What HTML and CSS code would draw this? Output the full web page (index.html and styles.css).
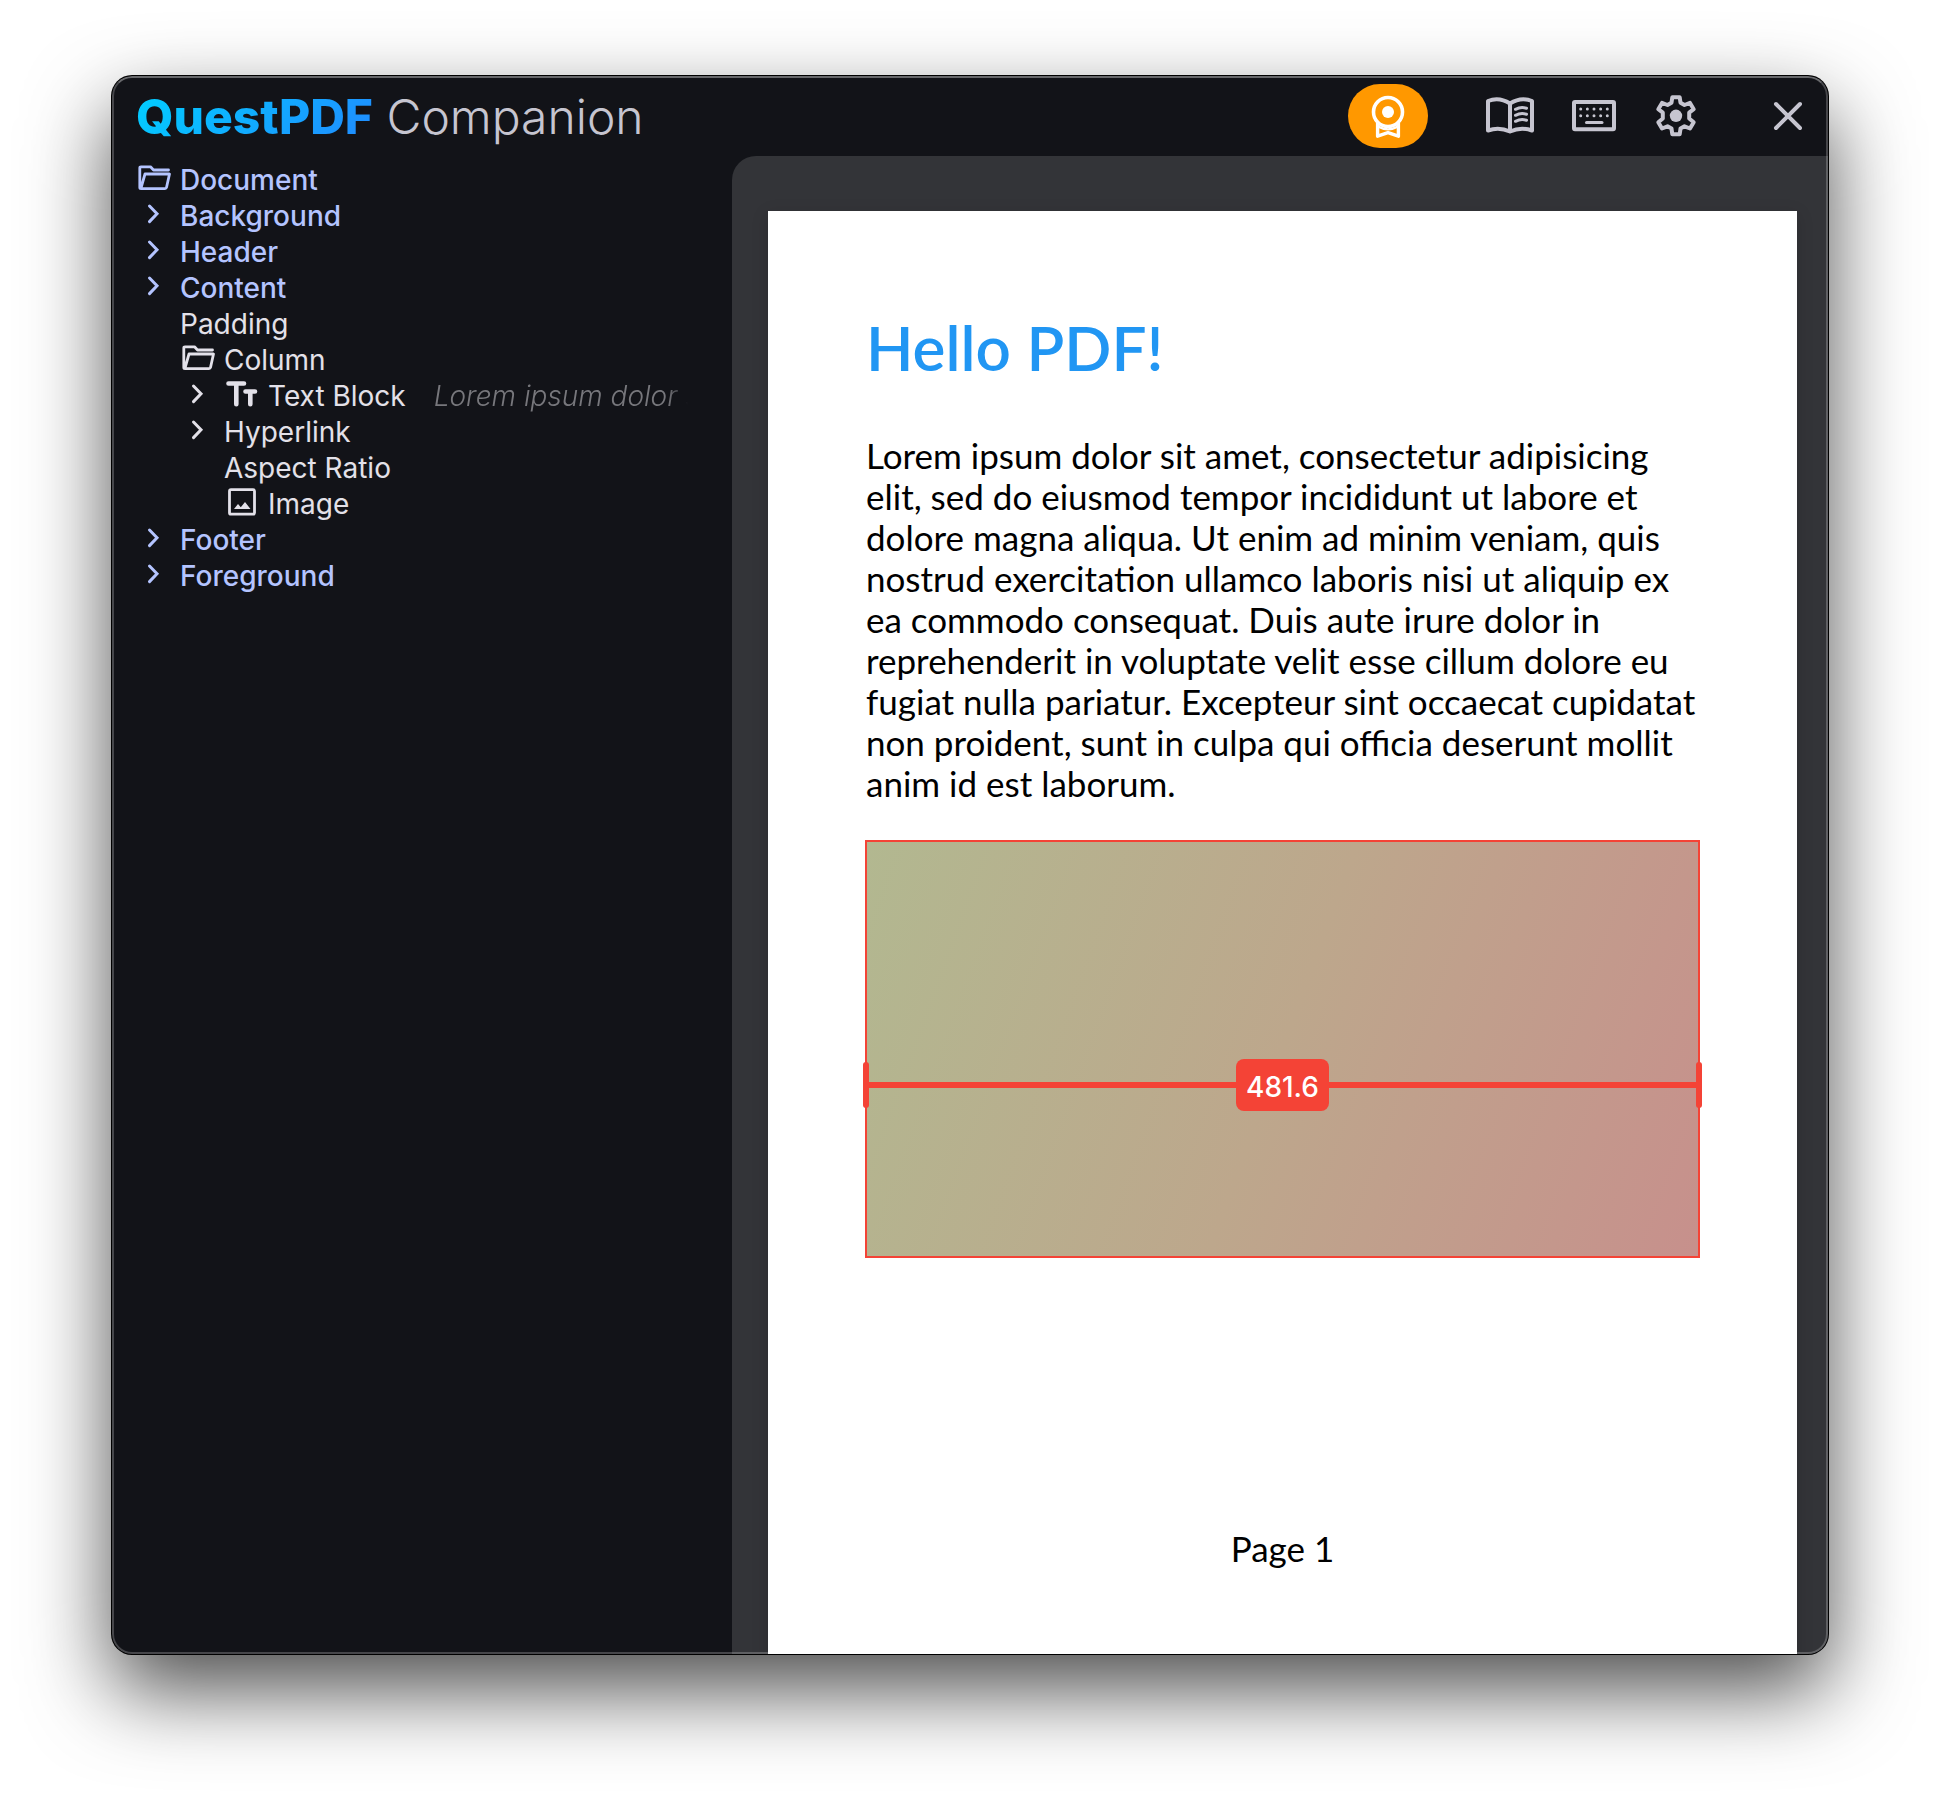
FILE: index.html
```html
<!DOCTYPE html>
<html lang="en">
<head>
  <meta charset="utf-8">
  <meta name="viewport" content="width=device-width, initial-scale=1">
  <title>QuestPDF Companion</title>
  <link rel="stylesheet" href="styles.css">
</head>
<body>
  <svg class="symbols" aria-hidden="true">
    <symbol id="folder" viewBox="0 0 36 36">
      <path d="M32.500 8H17.500L14.500 4.800H5Q3.800 4.800 3.800 6V25.500Q3.800 26.600 5 26.600H29Q30.200 26.600 30.500 25.500L33.500 12H9L5 26" fill="none" stroke="currentColor" stroke-width="2.800" stroke-linejoin="round" stroke-linecap="round"/>
    </symbol>
    <symbol id="chevron" viewBox="0 0 36 36">
      <path d="M13.500 8L21 15.800L13.500 23.600" fill="none" stroke="currentColor" stroke-width="3" stroke-linecap="round" stroke-linejoin="miter"/>
    </symbol>
    <symbol id="text" viewBox="0 0 36 36">
      <path d="M4.500 5.500H20M12.300 5.500V26.300M21.500 13.500H31M26.300 13.500V26.300" fill="none" stroke="currentColor" stroke-width="4.600" stroke-linecap="round"/>
    </symbol>
    <symbol id="image" viewBox="0 0 36 36">
      <rect x="5.500" y="3.700" width="25" height="24.500" rx="1.500" fill="none" stroke="currentColor" stroke-width="2.800"/>
      <path d="M10 23L14 18L16.800 21.300L21 16L26.500 23Z" fill="currentColor"/>
    </symbol>
  </svg>

  <div class="window">
    <header class="titlebar">
      <h1 class="brand"><span class="brand-name">QuestPDF</span> <span class="brand-product">Companion</span></h1>
      <button class="license" type="button" aria-label="License">
        <svg viewBox="0 0 48 48" fill="none" stroke="currentColor" stroke-width="3.600">
          <circle cx="24" cy="20" r="14.500"/>
          <circle cx="24" cy="20" r="6" fill="currentColor" stroke="none"/>
          <path d="M13.600 31V44.200L24 40.700L34.400 44.200V31" stroke-width="3.400" stroke-linejoin="round"/>
          <path d="M14.500 34.800Q24 40 33.500 34.800" stroke-width="2.400"/>
        </svg>
      </button>
      <nav class="tools" aria-label="Tools">
        <button class="tool" type="button" aria-label="Documentation">
          <svg viewBox="0 0 48 48" fill="none" stroke="currentColor" stroke-width="4" stroke-linejoin="round">
            <path d="M24 11.500Q13 4.500 2 9V38.500Q13 34.500 24 39.500Q35 34.500 46 38.500V9Q35 4.500 24 11.500V39.500"/>
            <path d="M29.500 17.300Q35 14.500 40.500 16.300M29.500 23.300Q35 20.500 40.500 22.300M29.500 29.300Q35 26.500 40.500 28.300" stroke-width="3" stroke-linecap="round"/>
          </svg>
        </button>
        <button class="tool" type="button" aria-label="Keyboard shortcuts">
          <svg viewBox="0 0 48 48" fill="none" stroke="currentColor" stroke-linecap="round">
            <rect x="5" y="10" width="40" height="27.300" rx="1" stroke-width="4"/>
            <path d="M11.700 17H39M11.700 23.700H39" stroke-width="3" stroke-dasharray="0 6.650"/>
            <path d="M17.500 30.500H33" stroke-width="3"/>
          </svg>
        </button>
        <button class="tool" type="button" aria-label="Settings">
          <svg viewBox="0 0 48 48" fill="none" stroke="currentColor" stroke-width="4" stroke-linejoin="round">
            <path d="M20.300 5.200H27.700L28.500 10.700L32.500 13L38 10.900L41.700 17.200L37.200 20.700V26.500L41.700 30.200L38 36.500L32.500 34.300L28.500 36.600L27.700 42.300H20.300L19.500 36.600L15.500 34.300L10 36.500L6.300 30.200L10.800 26.500V20.700L6.300 17.200L10 10.900L15.500 13L19.500 10.700Z"/>
            <circle cx="24" cy="23.800" r="6.200" fill="currentColor" stroke="none"/>
          </svg>
        </button>
      </nav>
      <button class="tool" type="button" aria-label="Close">
        <svg viewBox="0 0 48 48" fill="none" stroke="currentColor" stroke-width="4" stroke-linecap="round">
          <path d="M12 12L36 36M36 12L12 36"/>
        </svg>
      </button>
    </header>

    <div class="workspace">
      <aside class="sidebar">
        <ul class="tree">
          <li class="node section"><span class="slot"><svg><use href="#folder"/></svg></span><span class="label">Document</span></li>
          <li class="node section"><span class="slot"><svg><use href="#chevron"/></svg></span><span class="label">Background</span></li>
          <li class="node section"><span class="slot"><svg><use href="#chevron"/></svg></span><span class="label">Header</span></li>
          <li class="node section"><span class="slot"><svg><use href="#chevron"/></svg></span><span class="label">Content</span></li>
          <li class="node"><span class="slot"></span><span class="label">Padding</span></li>
          <li>
            <ul class="branch">
              <li class="node"><span class="slot"><svg><use href="#folder"/></svg></span><span class="label">Column</span></li>
              <li class="node"><span class="slot"><svg><use href="#chevron"/></svg></span><span class="slot"><svg><use href="#text"/></svg></span><span class="label">Text Block</span><span class="preview">Lorem ipsum dolor sit</span></li>
              <li class="node"><span class="slot"><svg><use href="#chevron"/></svg></span><span class="label">Hyperlink</span></li>
              <li class="node"><span class="slot"></span><span class="label">Aspect Ratio</span></li>
              <li class="node"><span class="slot"></span><span class="slot"><svg><use href="#image"/></svg></span><span class="label">Image</span></li>
            </ul>
          </li>
          <li class="node section"><span class="slot"><svg><use href="#chevron"/></svg></span><span class="label">Footer</span></li>
          <li class="node section"><span class="slot"><svg><use href="#chevron"/></svg></span><span class="label">Foreground</span></li>
        </ul>
      </aside>

      <main class="viewer">
        <article class="page">
          <h2 class="page-title">Hello PDF!</h2>
          <p class="page-text">Lorem ipsum dolor sit amet, consectetur adipisicing elit, sed do eiusmod tempor incididunt ut labore et dolore magna aliqua. Ut enim ad minim veniam, quis nostrud exercitation ullamco laboris nisi ut aliquip ex ea commodo consequat. Duis aute irure dolor in reprehenderit in voluptate velit esse cillum dolore eu fugiat nulla pariatur. Excepteur sint occaecat cupidatat non proident, sunt in culpa qui officia deserunt mollit anim id est laborum.</p>
          <div class="picture">
            <div class="measure"><span class="measure-value">481.6</span></div>
          </div>
          <footer class="page-footer">Page 1</footer>
        </article>
      </main>
    </div>
  </div>
</body>
</html>
```
FILE: styles.css
```css
* {
  box-sizing: border-box;
}

body {
  display: flex;
  height: 100vh;
  margin: 0;
  padding: 76px 112px 148px;
  overflow: hidden;
  background: #fff;
  font-family: Inter, "Liberation Sans", sans-serif;
}

h1,
h2,
p,
ul {
  margin: 0;
  padding: 0;
}

ul {
  list-style: none;
}

button {
  padding: 0;
  border: 0;
  background: none;
  cursor: pointer;
}

svg {
  display: block;
  width: 100%;
  height: 100%;
}

.symbols {
  position: absolute;
  width: 0;
  height: 0;
}

/* Window frame */

.window {
  position: relative;
  display: flex;
  flex: 1;
  flex-direction: column;
  min-width: 0;
  overflow: hidden;
  border-radius: 20px;
  background: #121318;
  box-shadow: 0 0 0 1px #000, 0 36px 84px rgba(0, 0, 0, 0.7);
}

.window::after {
  position: absolute;
  inset: 0;
  border: 2px solid rgba(255, 255, 255, 0.22);
  border-top-color: rgba(255, 255, 255, 0.36);
  border-radius: 20px;
  content: "";
  pointer-events: none;
}

.titlebar {
  display: flex;
  flex: none;
  align-items: center;
  height: 80px;
  padding: 0 16px 0 24px;
  color: #c6c5d0;
}

.brand {
  flex: 1;
  padding-top: 2px;
  font-size: 48px;
  font-weight: 300;
  line-height: 64px;
  white-space: nowrap;
}

.brand-name {
  background: linear-gradient(135deg, #00d0ff, #1e90ff 90%);
  background-clip: text;
  color: transparent;
  font-weight: 800;
}

.license {
  width: 80px;
  height: 64px;
  padding: 8px 16px;
  border-radius: 32px;
  background: #ff9800;
  color: #fff;
}

.tools {
  display: flex;
  gap: 35px;
  margin: 0 64px 0 58px;
}

.tool {
  width: 48px;
  height: 48px;
  color: inherit;
}

/* Document tree */

.workspace {
  display: flex;
  flex: 1;
  min-height: 0;
}

.sidebar {
  flex: none;
  width: 620px;
  padding: 6px 44px 0 24px;
}

.node {
  display: flex;
  align-items: center;
  height: 36px;
  color: #e3e1e9;
  font-size: 28px;
  line-height: 36px;
  white-space: nowrap;
}

.section {
  color: #b4c4ff;
  font-weight: 500;
}

.branch {
  padding-left: 44px;
}

.slot {
  flex: none;
  width: 36px;
  height: 36px;
  margin-right: 8px;
}

.preview {
  flex: 1;
  min-width: 0;
  margin-left: 28px;
  overflow: hidden;
  color: #77777c;
  font-style: italic;
  font-weight: 300;
  mask-image: linear-gradient(to left, transparent, #000 20px);
}

/* Page preview */

.viewer {
  flex: 1;
  min-width: 0;
  padding: 55px 31px 0 36px;
  overflow: hidden;
  border-top-left-radius: 24px;
  background: #333438;
}

.page {
  display: flex;
  flex-direction: column;
  aspect-ratio: 210 / 297;
  padding: 98px 97px 97px;
  background: #fff;
  box-shadow: 0 4px 16px rgba(0, 0, 0, 0.15);
  color: #000;
  font-family: Lato, "Open Sans", sans-serif;
  font-size: 35px;
  line-height: 41px;
}

.page-title {
  color: #2196f3;
  font-size: 62px;
  font-weight: 600;
  line-height: 77px;
}

.page-title,
.page-text {
  padding-left: 1px;
}

.page-text {
  margin: 49px 0 36px;
}

.picture {
  position: relative;
  flex: none;
  aspect-ratio: 2 / 1;
  border: 2px solid #f44336;
  background: linear-gradient(110deg, #b2b890, #bda78c 50%, #c7908c);
}

.measure {
  position: absolute;
  top: 217px;
  right: -4px;
  left: -4px;
  display: flex;
  align-items: center;
  justify-content: center;
  height: 52px;
  background: linear-gradient(#f44336, #f44336) center / 100% 6px no-repeat;
}

.measure::before,
.measure::after {
  width: 6px;
  height: 46px;
  border-radius: 3px;
  background: #f44336;
  content: "";
}

.measure-value {
  margin: 0 auto;
  padding: 4px 10px 0;
  border-radius: 8px;
  background: #f44336;
  color: #fff;
  font-family: Inter, sans-serif;
  font-size: 28px;
  font-weight: 500;
  line-height: 48px;
}

.page-footer {
  margin-top: auto;
  text-align: center;
}
```
